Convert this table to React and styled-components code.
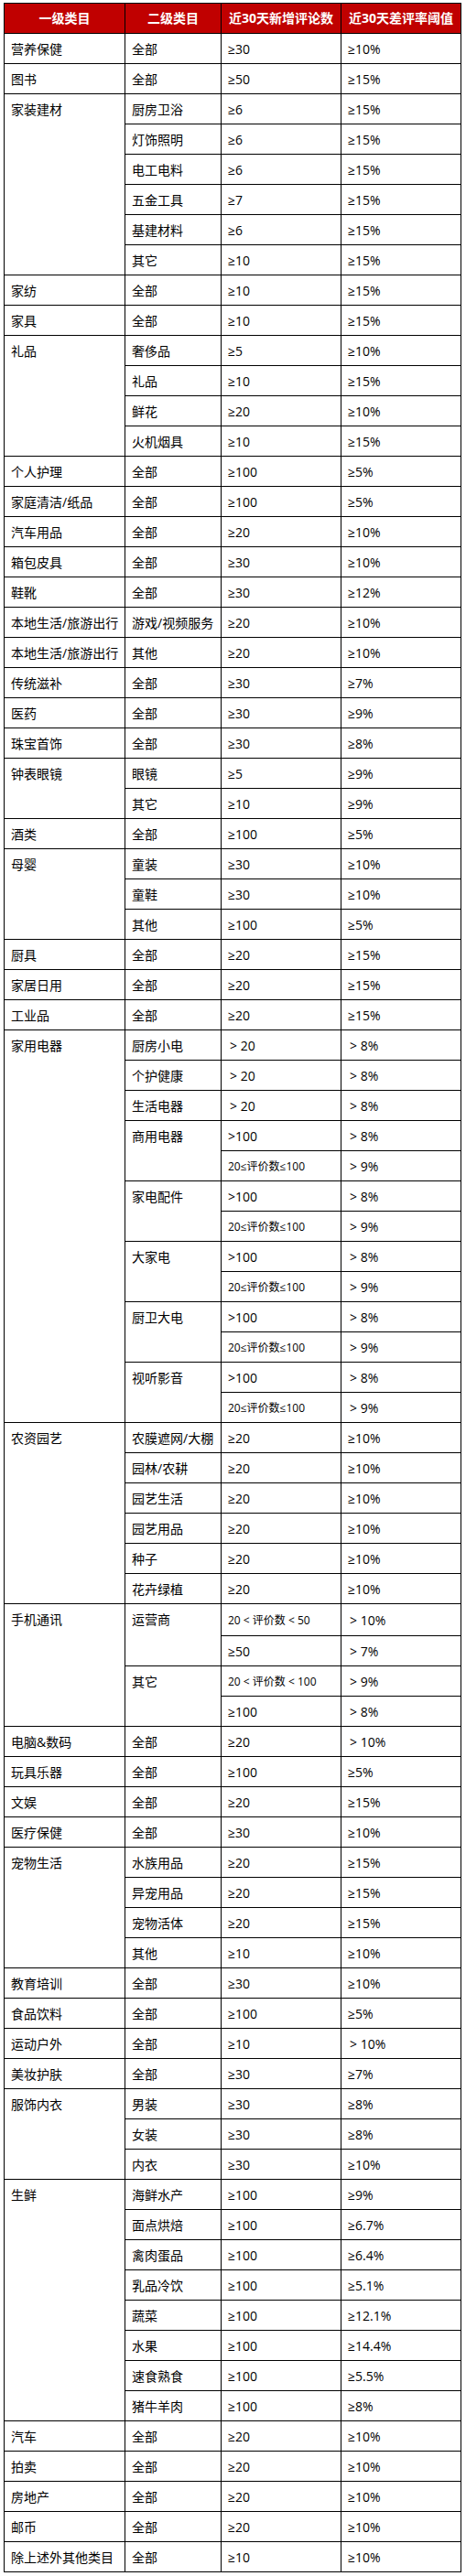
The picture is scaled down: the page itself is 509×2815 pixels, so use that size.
import React from "react";
import styled, { createGlobalStyle } from "styled-components";

const Global = createGlobalStyle`
  html, body { margin: 0; padding: 0; background: #fff; }
  body { font-family: "Open Sans", "Noto Sans CJK SC", sans-serif; color: #000; }
`;

const Page = styled.div`
  padding: 3px 6px 5px 4px;
  width: 499px;
`;

const Table = styled.table`
  border-collapse: collapse;
  table-layout: fixed;
  width: 499px;
  font-family: "Open Sans", "Noto Sans CJK SC", sans-serif;
  font-size: 14px;
  color: #000;
`;

const Th = styled.th`
  background: #c00000;
  color: #fff;
  font-weight: bold;
  font-size: 14px;
  line-height: 20px;
  padding: 6px 2px;
  border: 1px solid #000;
  text-align: center;
  white-space: nowrap;
  overflow: hidden;
`;

const Td = styled.td`
  border: 1px solid #000;
  padding: 7px 4px 5px 7px;
  line-height: 20px;
  height: ${(p) => (p.$tall ? 22 : 20)}px;
  vertical-align: ${(p) => (p.$span ? "top" : "middle")};
  text-align: left;
  white-space: nowrap;
  overflow: hidden;
  font-size: ${(p) => (p.$small ? "12px" : "14px")};
`;

const Sym = styled.span`
  display: inline-block;
  margin-left: ${(p) => p.$ml || 0}px;
`;

// groups: [first, [[second, [[count, rate, small, tall], ...]], ...]]
const G = (a, rows) => [a, rows];
const S = (b, vals) => [b, vals];
const one = (a, c, r) => G(a, [S("全部", [[c, r]])]);

const data = [
  one("营养保健", "≥30", "≥10%"),
  one("图书", "≥50", "≥15%"),
  G("家装建材", [
    S("厨房卫浴", [["≥6", "≥15%"]]),
    S("灯饰照明", [["≥6", "≥15%"]]),
    S("电工电料", [["≥6", "≥15%"]]),
    S("五金工具", [["≥7", "≥15%"]]),
    S("基建材料", [["≥6", "≥15%"]]),
    S("其它", [["≥10", "≥15%"]]),
  ]),
  one("家纺", "≥10", "≥15%"),
  one("家具", "≥10", "≥15%"),
  G("礼品", [
    S("奢侈品", [["≥5", "≥10%"]]),
    S("礼品", [["≥10", "≥15%"]]),
    S("鲜花", [["≥20", "≥10%"]]),
    S("火机烟具", [["≥10", "≥15%"]]),
  ]),
  one("个人护理", "≥100", "≥5%"),
  one("家庭清洁/纸品", "≥100", "≥5%"),
  one("汽车用品", "≥20", "≥10%"),
  one("箱包皮具", "≥30", "≥10%"),
  one("鞋靴", "≥30", "≥12%"),
  G("本地生活/旅游出行", [S("游戏/视频服务", [["≥20", "≥10%"]])]),
  G("本地生活/旅游出行", [S("其他", [["≥20", "≥10%"]])]),
  one("传统滋补", "≥30", "≥7%"),
  one("医药", "≥30", "≥9%"),
  one("珠宝首饰", "≥30", "≥8%"),
  G("钟表眼镜", [
    S("眼镜", [["≥5", "≥9%"]]),
    S("其它", [["≥10", "≥9%"]]),
  ]),
  one("酒类", "≥100", "≥5%"),
  G("母婴", [
    S("童装", [["≥30", "≥10%"]]),
    S("童鞋", [["≥30", "≥10%"]]),
    S("其他", [["≥100", "≥5%"]]),
  ]),
  one("厨具", "≥20", "≥15%"),
  one("家居日用", "≥20", "≥15%"),
  one("工业品", "≥20", "≥15%"),
  G("家用电器", [
    S("厨房小电", [["gt20", "gt8%"]]),
    S("个护健康", [["gt20", "gt8%"]]),
    S("生活电器", [["gt20", "gt8%"]]),
    S("商用电器", [[">100", "gt8%"], ["20≤评价数≤100", "gt9%", true]]),
    S("家电配件", [[">100", "gt8%"], ["20≤评价数≤100", "gt9%", true]]),
    S("大家电", [[">100", "gt8%"], ["20≤评价数≤100", "gt9%", true]]),
    S("厨卫大电", [[">100", "gt8%"], ["20≤评价数≤100", "gt9%", true]]),
    S("视听影音", [[">100", "gt8%"], ["20≤评价数≤100", "gt9%", true]]),
  ]),
  G("农资园艺", [
    S("农膜遮网/大棚", [["≥20", "≥10%"]]),
    S("园林/农耕", [["≥20", "≥10%"]]),
    S("园艺生活", [["≥20", "≥10%"]]),
    S("园艺用品", [["≥20", "≥10%"]]),
    S("种子", [["≥20", "≥10%"]]),
    S("花卉绿植", [["≥20", "≥10%"]]),
  ]),
  G("手机通讯", [
    S("运营商", [["20 < 评价数 < 50", "gt10%", true, true], ["≥50", "gt7%"]]),
    S("其它", [["20 < 评价数 < 100", "gt9%", true], ["≥100", "gt8%"]]),
  ]),
  one("电脑&数码", "≥20", "gt10%"),
  one("玩具乐器", "≥100", "≥5%"),
  one("文娱", "≥20", "≥15%"),
  one("医疗保健", "≥30", "≥10%"),
  G("宠物生活", [
    S("水族用品", [["≥20", "≥15%"]]),
    S("异宠用品", [["≥20", "≥15%"]]),
    S("宠物活体", [["≥20", "≥15%"]]),
    S("其他", [["≥10", "≥10%"]]),
  ]),
  one("教育培训", "≥30", "≥10%"),
  one("食品饮料", "≥100", "≥5%"),
  one("运动户外", "≥10", "gt10%"),
  one("美妆护肤", "≥30", "≥7%"),
  G("服饰内衣", [
    S("男装", [["≥30", "≥8%"]]),
    S("女装", [["≥30", "≥8%"]]),
    S("内衣", [["≥30", "≥10%"]]),
  ]),
  G("生鲜", [
    S("海鲜水产", [["≥100", "≥9%"]]),
    S("面点烘焙", [["≥100", "≥6.7%"]]),
    S("禽肉蛋品", [["≥100", "≥6.4%"]]),
    S("乳品冷饮", [["≥100", "≥5.1%"]]),
    S("蔬菜", [["≥100", "≥12.1%"]]),
    S("水果", [["≥100", "≥14.4%"]]),
    S("速食熟食", [["≥100", "≥5.5%"]]),
    S("猪牛羊肉", [["≥100", "≥8%"]]),
  ]),
  one("汽车", "≥20", "≥10%"),
  one("拍卖", "≥20", "≥10%"),
  one("房地产", "≥20", "≥10%"),
  one("邮币", "≥20", "≥10%"),
  one("除上述外其他类目", "≥10", "≥10%"),
];

function Val({ v }) {
  if (v.startsWith("gt")) {
    return (
      <>
        <Sym $ml={2}>&gt;</Sym> {v.slice(2)}
      </>
    );
  }
  return v;
}

export default function App() {
  const rows = [];
  let key = 0;
  data.forEach(([a, subs]) => {
    const total = subs.reduce((n, s) => n + s[1].length, 0);
    let firstA = true;
    subs.forEach(([b, vals]) => {
      let firstB = true;
      vals.forEach(([c, r, small, tall]) => {
        rows.push(
          <tr key={key++}>
            {firstA && (
              <Td rowSpan={total} $span={total > 1}>
                {a}
              </Td>
            )}
            {firstB && (
              <Td rowSpan={vals.length} $span={vals.length > 1}>
                {b}
              </Td>
            )}
            <Td $small={small} $tall={tall}>
              <Val v={c} />
            </Td>
            <Td $tall={tall}>
              <Val v={r} />
            </Td>
          </tr>
        );
        firstA = false;
        firstB = false;
      });
    });
  });

  return (
    <>
      <Global />
      <Page>
        <Table>
          <colgroup>
            <col style={{ width: "132px" }} />
            <col style={{ width: "105px" }} />
            <col style={{ width: "131px" }} />
            <col style={{ width: "131px" }} />
          </colgroup>
          <thead>
            <tr>
              <Th>一级类目</Th>
              <Th>二级类目</Th>
              <Th>近30天新增评论数</Th>
              <Th>近30天差评率阈值</Th>
            </tr>
          </thead>
          <tbody>{rows}</tbody>
        </Table>
      </Page>
    </>
  );
}
